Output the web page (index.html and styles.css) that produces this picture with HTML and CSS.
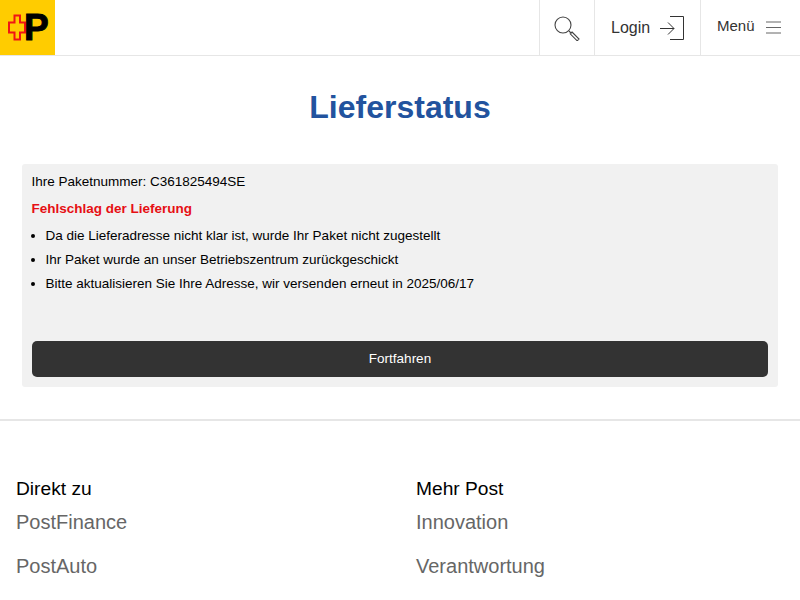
FILE: index.html
```html
<!DOCTYPE html>
<html lang="de">
<head>
<meta charset="utf-8">
<title>Lieferstatus</title>
<link rel="stylesheet" href="styles.css">
</head>
<body>
<header class="topbar">
  <a class="logo" href="#" aria-label="Post">
    <svg class="logo-svg" width="55" height="55" viewBox="0 0 55 55">
      <path d="M14.500 15.500h5.500v7h5v10h-5v7h-5.500v-7h-5.500v-10h5.500z" fill="none" stroke="#f01414" stroke-width="2"/>
      <text class="logo-p" x="24" y="40">P</text>
    </svg>
  </a>
  <nav class="nav">
    <a class="nav-item nav-search" href="#" aria-label="Suche">
      <svg width="26" height="26" viewBox="0 0 26 26" fill="none" stroke="#444" stroke-width="1.100">
        <circle cx="9" cy="10" r="8"/>
        <path d="M15 16l2.500 2.500M18 17l7 7-1.800 1.800-7-7z"/>
      </svg>
    </a>
    <a class="nav-item nav-login" href="#">
      <span>Login</span>
      <svg width="24" height="24" viewBox="0 0 24 24" fill="none" stroke="#333" stroke-width="1">
        <path d="M10 .500h13.500v23h-13.500M0 12.500h14M8 6.500l6 6-6 6"/>
      </svg>
    </a>
    <a class="nav-item nav-menu" href="#">
      <span>Menü</span>
      <svg width="15" height="13" viewBox="0 0 15 13" fill="none" stroke="#666" stroke-width="1">
        <path d="M0 1h15M0 6.500h15M0 12h15"/>
      </svg>
    </a>
  </nav>
</header>
<main class="main">
  <h1 class="title">Lieferstatus</h1>
  <section class="card">
    <p class="line">Ihre Paketnummer: C361825494SE</p>
    <p class="line fail">Fehlschlag der Lieferung</p>
    <ul class="list">
      <li>Da die Lieferadresse nicht klar ist, wurde Ihr Paket nicht zugestellt</li>
      <li>Ihr Paket wurde an unser Betriebszentrum zurückgeschickt</li>
      <li>Bitte aktualisieren Sie Ihre Adresse, wir versenden erneut in 2025/06/17</li>
    </ul>
    <button class="btn" type="button">Fortfahren</button>
  </section>
</main>
<footer class="footer">
  <div class="col">
    <h2 class="col-title">Direkt zu</h2>
    <a class="col-link" href="#">PostFinance</a>
    <a class="col-link" href="#">PostAuto</a>
  </div>
  <div class="col">
    <h2 class="col-title">Mehr Post</h2>
    <a class="col-link" href="#">Innovation</a>
    <a class="col-link" href="#">Verantwortung</a>
  </div>
</footer>
</body>
</html>
```
FILE: styles.css
```css
* { box-sizing: border-box; }
html, body { margin: 0; padding: 0; }
body { font-family: "Liberation Sans", Arial, sans-serif; color: #000; background: #fff; }
a { text-decoration: none; color: inherit; }

.topbar { display: flex; justify-content: space-between; height: 56px; border-bottom: 1px solid #e6e6e6; }
.logo { display: block; width: 55px; height: 55px; background: #ffcc00; }
.logo-svg { display: block; }
.logo-p { font: bold 37px "Liberation Sans", Arial, sans-serif; fill: #000; stroke: #000; stroke-width: 1px; }

.nav { display: flex; height: 55px; color: #333; }
.nav-item { display: flex; align-items: center; border-left: 1px solid #e6e6e6; }
.nav-search { width: 55px; justify-content: center; }
.nav-login { width: 106px; padding-left: 16px; gap: 10px; font-size: 16px; }
.nav-menu { width: 100px; padding-left: 16px; gap: 11px; font-size: 15px; }
.nav-menu span { margin-top: -4px; }

.main { padding: 0 22px; }
.title { margin: 0; padding-top: 33px; height: 108px; text-align: center; font-size: 32px; line-height: 37px; font-weight: bold; color: #22539e; }
.card { background: #f1f1f1; border-radius: 3px; padding: 10px 10px 10px 9.5px; height: 223px; font-size: 13.5px; }
.line { margin: 0 0 12px; line-height: 15px; }
.fail { color: #e60f14; font-weight: bold; }
.list { margin: 0 0 50px; padding: 0 0 0 14px; }
.list li { line-height: 15px; margin-bottom: 9px; }
.btn { display: block; margin-left: 0.5px; width: 736px; height: 36px; padding: 0 0 2px; border: 0; border-radius: 5px; background: #333; color: #fff; font: 13.5px "Liberation Sans", Arial, sans-serif; }

.footer { display: flex; margin-top: 32px; padding: 57px 0 0 16px; border-top: 2px solid #e6e6e6; }
.col { flex: 0 0 400px; }
.col-title { margin: 0 0 11px; font-size: 19.2px; line-height: 22px; font-weight: normal; color: #000; }
.col-link { display: block; font-size: 20px; line-height: 23px; margin-bottom: 21px; color: #666; }
```
